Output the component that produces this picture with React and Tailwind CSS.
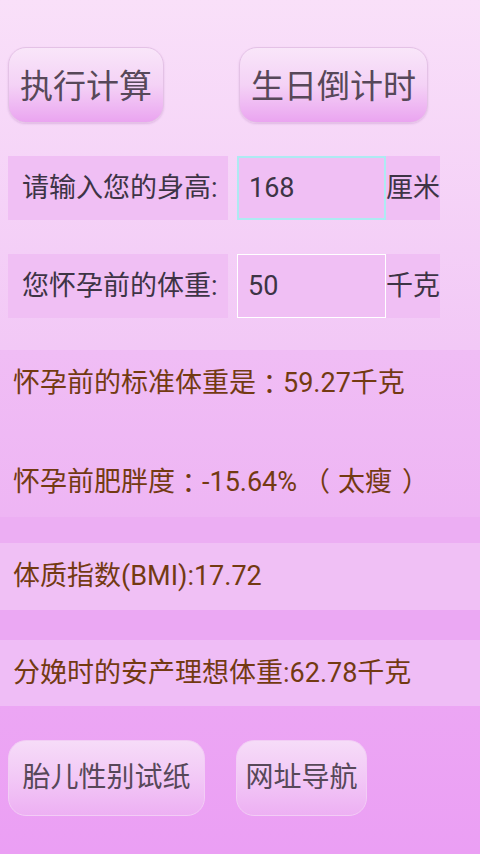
import React from 'react';

const font = { fontFamily: 'Roboto, "Noto Sans CJK SC", sans-serif' };

// centred full-width punctuation, like the phone's fallback font
const Colon = () => <span style={{ fontFamily: '"Noto Sans CJK TC", sans-serif' }}>：</span>;

function TopButton({ label, className = '' }) {
    return (
        <button
            className={
                'h-[76px] whitespace-nowrap rounded-[18px] border border-[#e4c2e6] bg-linear-to-b from-[#f9e6f9] via-[#f4d2f6] to-[#eaa4f0] pt-[3px] text-[33px] text-[#574859] shadow-[0_1px_2px_rgba(160,90,170,0.25)] ' +
                className
            }
        >
            {label}
        </button>
    );
}

function BottomButton({ label, className = '' }) {
    return (
        <button
            className={
                'h-[76px] whitespace-nowrap rounded-[18px] border border-[#f2cdf5] bg-linear-to-b from-[#f6dcf8] via-[#f2c8f6] to-[#edb0f3] text-[28px] text-[#574859] ' +
                className
            }
        >
            {label}
        </button>
    );
}

function InputRow({ label, value, unit, focused }) {
    return (
        <div className="flex h-[64px] pl-[8px]">
            <div className="flex w-[220px] items-center whitespace-nowrap bg-[#f0bff4] pl-[14px] text-[27px] text-[#3d3445]">
                {label}
            </div>
            <input
                defaultValue={value}
                className={
                    'ml-[9px] h-[64px] w-[149px] bg-[#f0bff4] pl-[10px] text-[27px] text-[#3d3445] outline-none ' +
                    (focused ? 'border-2 border-[#aeeaf2]' : 'border border-white')
                }
            />
            <div className="flex w-[54px] items-center whitespace-nowrap bg-[#f0bff4] text-[27px] text-[#3d3445]">
                {unit}
            </div>
        </div>
    );
}

export default function App() {
    return (
        <div className="flex h-[854px] w-[480px] flex-col overflow-hidden" style={font}>
            {/* top part: buttons + inputs */}
            <div className="h-[350px] bg-linear-to-b from-[#f9e0f9] to-[#f2c8f6] pt-[47px]">
                <div className="flex pl-[8px]">
                    <TopButton label="执行计算" className="w-[156px]" />
                    <TopButton label="生日倒计时" className="ml-[75px] w-[189px]" />
                </div>

                <div className="mt-[33px]">
                    <InputRow label="请输入您的身高:" value="168" unit="厘米" focused />
                </div>
                <div className="mt-[34px]">
                    <InputRow label="您怀孕前的体重:" value="50" unit="千克" />
                </div>
            </div>

            {/* results */}
            <div className="h-[167px] whitespace-nowrap bg-linear-to-b from-[#f0bdf5] to-[#eeb5f4] text-[27px] text-[#733a12]">
                <div className="flex h-[66px] items-center pl-[13px]">
                    怀孕前的标准体重是<Colon />59.27千克
                </div>
                <div className="mt-[33px] flex h-[66px] items-center pl-[13px]">
                    怀孕前肥胖度<Colon />-15.64%
                    <span className="ml-[6px] mr-[8px]">（</span>太瘦<span className="ml-[10px]">）</span>
                </div>
            </div>
            <div className="h-[26px] bg-[#ecaef3]"></div>
            <div className="flex h-[67px] items-center whitespace-nowrap bg-[#f0c0f5] pl-[13px] text-[27px] text-[#733a12]">
                体质指数(BMI):17.72
            </div>
            <div className="h-[30px] bg-[#eba8f3]"></div>
            <div className="flex h-[66px] items-center whitespace-nowrap bg-[#efbdf6] pl-[13px] text-[27px] text-[#733a12]">
                分娩时的安产理想体重:62.78千克
            </div>

            {/* bottom buttons */}
            <div className="flex-1 bg-linear-to-b from-[#eca6f4] to-[#eb9ff4] pt-[34px]">
                <div className="flex pl-[8px]">
                    <BottomButton label="胎儿性别试纸" className="w-[197px]" />
                    <BottomButton label="网址导航" className="ml-[31px] w-[131px]" />
                </div>
            </div>
        </div>
    );
}
